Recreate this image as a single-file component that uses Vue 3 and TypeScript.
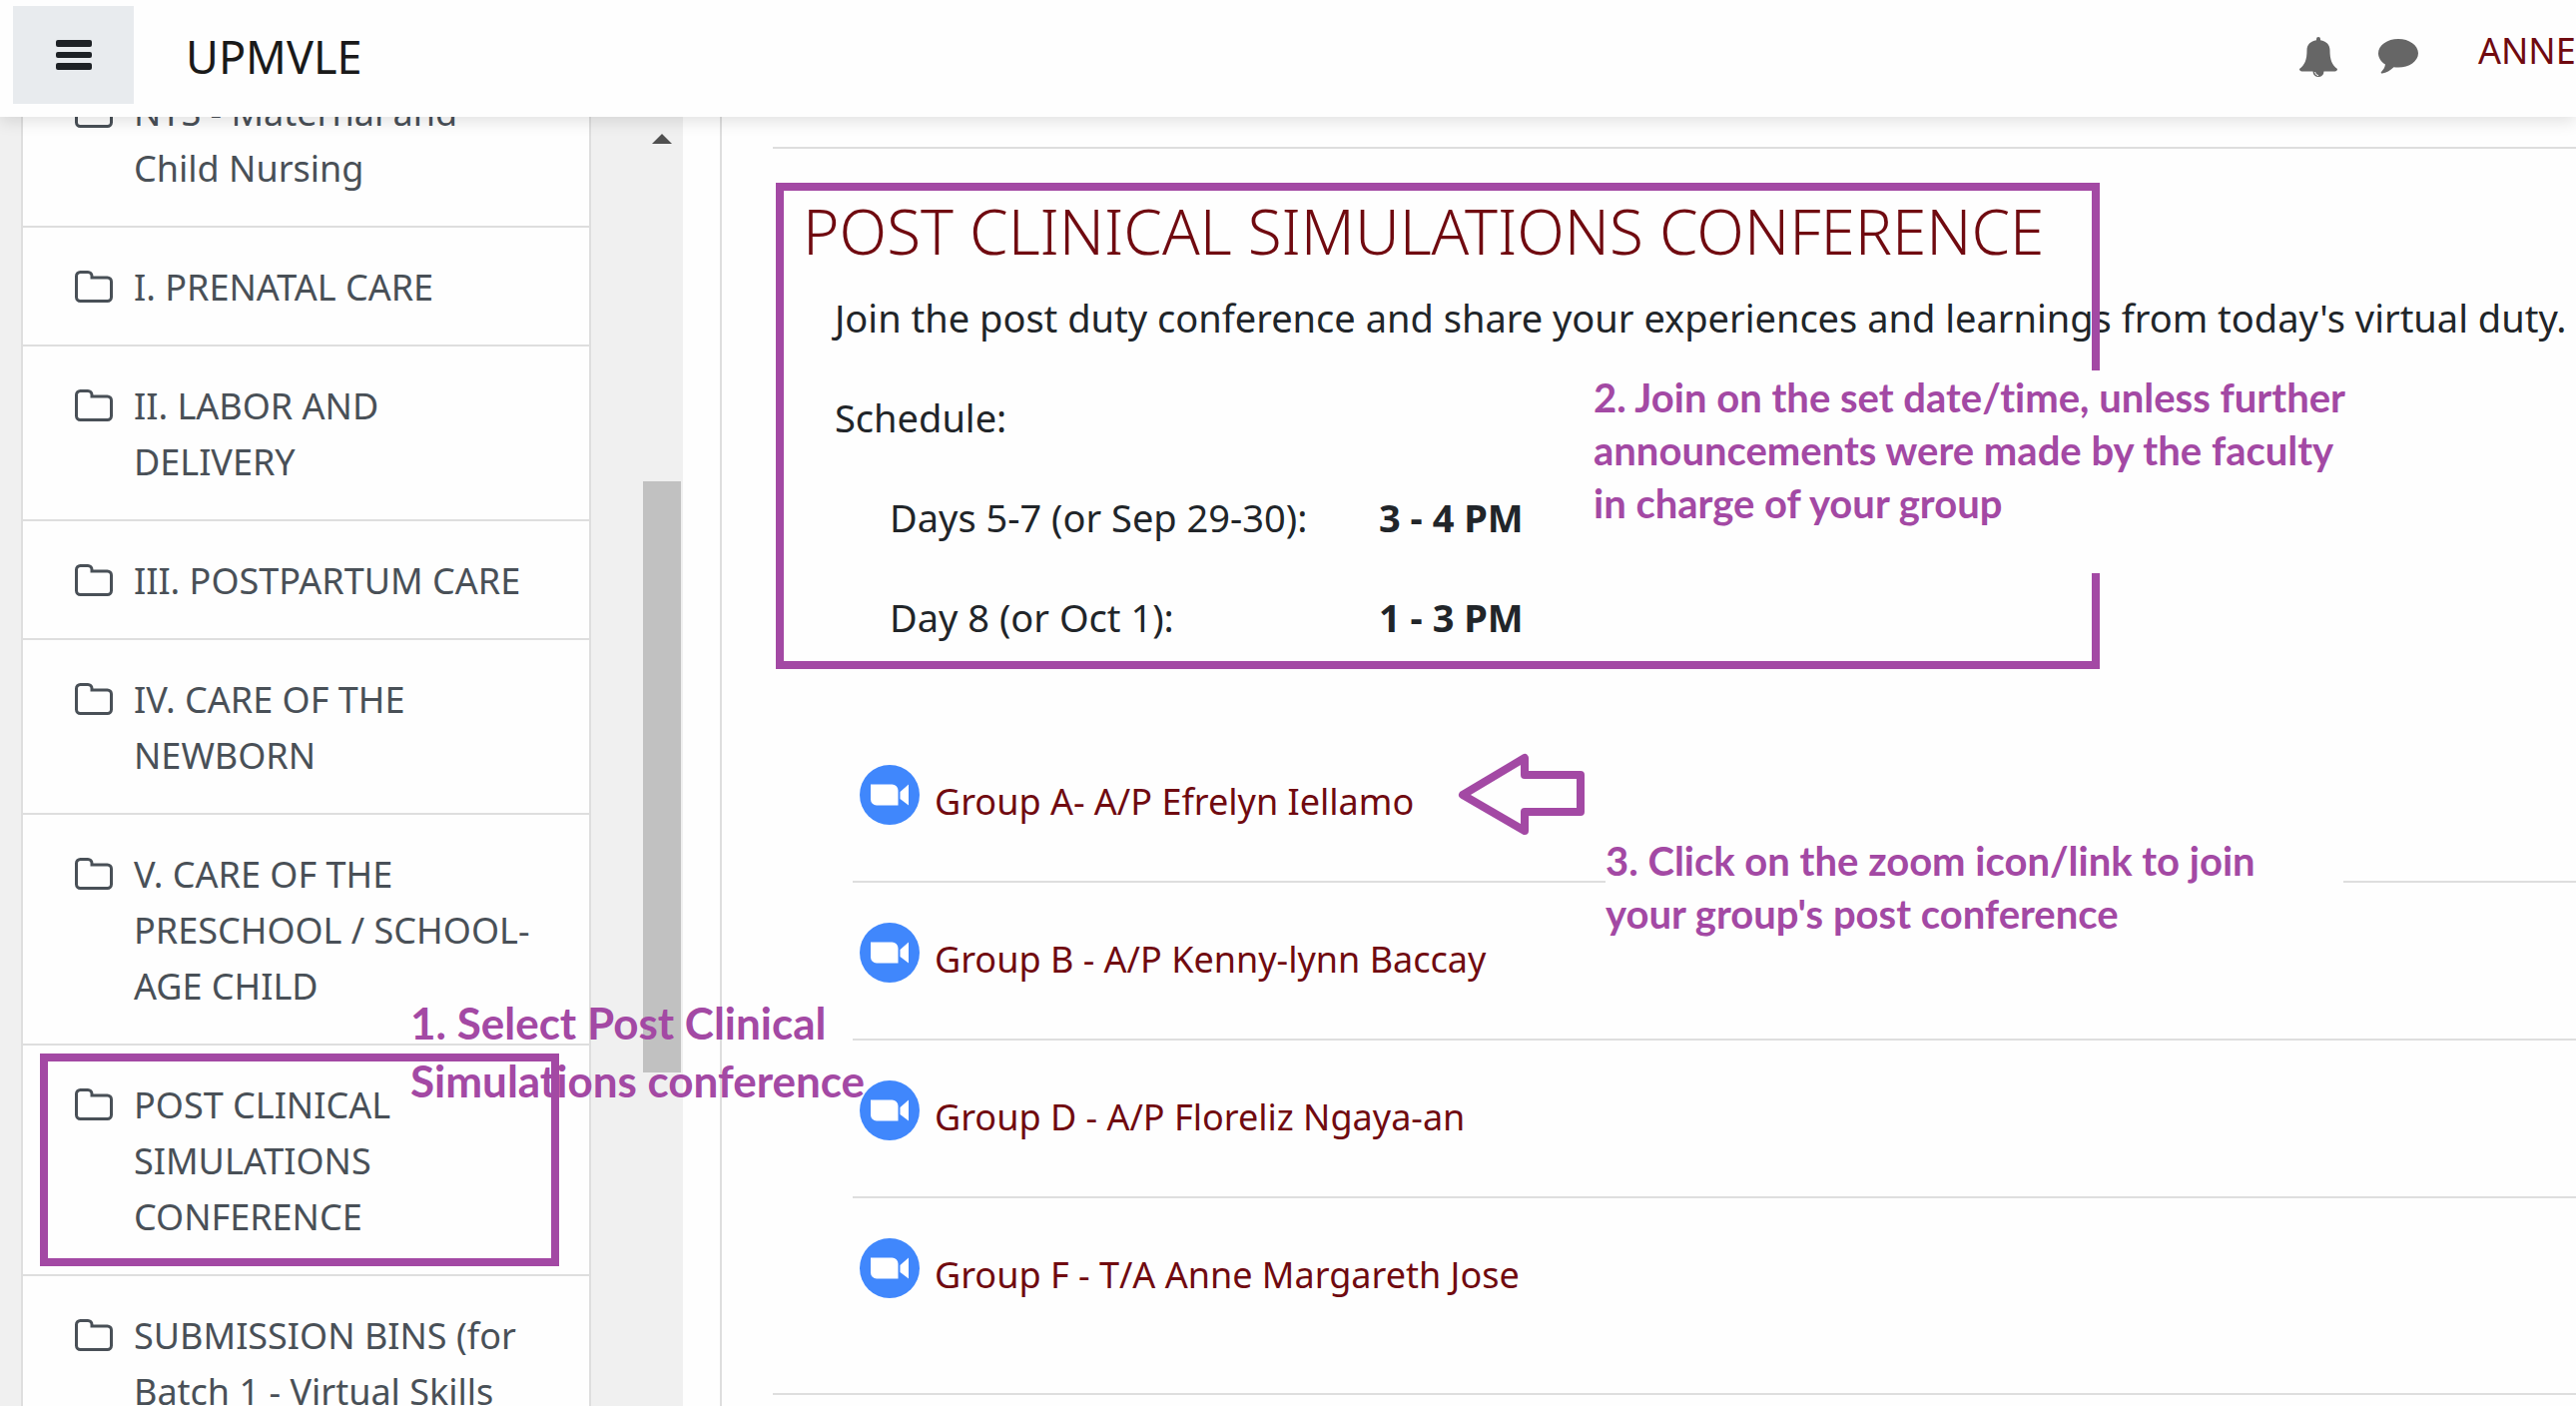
<script setup lang="ts">
interface Group {
  id: string
  label: string
}

const sections: string[] = [
  'NTS - Maternal and Child Nursing',
  'I. PRENATAL CARE',
  'II. LABOR AND DELIVERY',
  'III. POSTPARTUM CARE',
  'IV. CARE OF THE NEWBORN',
  'V. CARE OF THE PRESCHOOL / SCHOOL-AGE CHILD',
  'POST CLINICAL SIMULATIONS CONFERENCE',
  'SUBMISSION BINS (for Batch 1 - Virtual Skills',
]
const selected = 'POST CLINICAL SIMULATIONS CONFERENCE'

const groups: Group[] = [
  { id: 'a', label: 'Group A- A/P Efrelyn Iellamo' },
  { id: 'b', label: 'Group B - A/P Kenny-lynn Baccay' },
  { id: 'd', label: 'Group D - A/P Floreliz Ngaya-an' },
  { id: 'f', label: 'Group F - T/A Anne Margareth Jose' },
]
</script>

<template>
  <div class="page">
    <header class="topbar">
      <button class="menu" type="button" aria-label="Side panel">
        <svg width="36" height="30" viewBox="0 0 36 30">
          <rect y="0" width="36" height="7" rx="2" />
          <rect y="12" width="36" height="6" rx="2" />
          <rect y="23" width="36" height="7" rx="2" />
        </svg>
      </button>
      <a class="brand" href="#">UPMVLE</a>
      <div class="tools">
        <button class="tool" type="button" aria-label="Notifications">
          <svg width="38" height="40" viewBox="0 0 38 40">
            <path d="M17 3.200V2a2 2 0 0 1 4 0v1.200C27 4 30.500 8 30.500 13c0 10 2 15 7.500 19 0 1.500-1 2.500-2.500 2.500h-33C1 34.500 0 33.500 0 32c5.500-4 7.500-9 7.500-19C7.500 8 11 4 17 3.200zM13.500 34.500h11a5.500 5.500 0 0 1-11 0z" />
            <path d="M15.500 35a4 4 0 0 0 3.500 3.600" fill="none" stroke="#fff" />
          </svg>
        </button>
        <button class="tool" type="button" aria-label="Messages">
          <svg width="40" height="35" viewBox="0 0 40 35">
            <path d="M20 0c11 0 20 6.300 20 14.300S31 28.600 20 28.600c-1.500 0-3-.1-4.500-.3-3.500 3.500-7.500 5.500-11.500 6.200-1 .2-1.800-.9-1-1.600 2-1.900 3.500-4 4-7.300C2.500 22.900 0 18.800 0 14.300 0 6.300 9 0 20 0z" />
          </svg>
        </button>
        <a class="user" href="#">ANNE</a>
      </div>
    </header>

    <div class="body">
      <aside class="drawer">
        <nav class="sections">
          <a
            v-for="name in sections"
            :key="name"
            href="#"
            class="section"
          >
            <svg class="folder" width="38" height="32" viewBox="0 0 38 32">
              <path d="M1.500 5.500a4 4 0 0 1 4-4h7.500a4 4 0 0 1 4 4v1.500h15.500a4 4 0 0 1 4 4v15.500a4 4 0 0 1-4 4h-27a4 4 0 0 1-4-4z" />
            </svg>
            <span>{{ name }}</span>
            <span v-if="name === selected" class="mark" />
          </a>
        </nav>
        <div class="track">
          <div class="arrow-up" />
          <div class="thumb" />
        </div>
        <p class="note note-one">1. Select Post Clinical<br />Simulations conference</p>
      </aside>

      <main class="content">
        <section class="topic">
          <h1>POST CLINICAL SIMULATIONS CONFERENCE</h1>
          <div class="summary">
            <p>Join the post duty conference and share your experiences and learnings from today's virtual duty.</p>
            <p>Schedule:</p>
            <p class="slot"><span>Days 5-7 (or Sep 29-30):</span><b>3 - 4 PM</b></p>
            <p class="slot"><span>Day 8 (or Oct 1):</span><b>1 - 3 PM</b></p>
          </div>
          <div class="frame" />
          <p class="note note-two">2. Join on the set date/time, unless further<br />announcements were made by the faculty<br />in charge of your group</p>

          <ul class="groups">
            <li v-for="group in groups" :key="group.id">
              <a href="#">
                <svg width="60" height="60" viewBox="0 0 60 60">
                  <circle cx="30" cy="30" r="30" fill="#4087fc" />
                  <path d="M11 19.500h21.500a6 6 0 0 1 6 6V40.500H17a6 6 0 0 1-6-6zM40.500 27l8.500-7.500v21L40.500 34z" fill="#fff" />
                </svg>
                <span>{{ group.label }}</span>
              </a>
            </li>
          </ul>
          <svg class="pointer" width="128" height="84" viewBox="0 0 128 84">
            <path d="M5 42L67 5V22H123V59H67V78z" />
          </svg>
          <p class="note note-three">3. Click on the zoom icon/link to join<br />your group's post conference</p>
        </section>
      </main>
    </div>
  </div>
</template>

<style>
body {
  margin: 0;
  overflow: hidden;
}
</style>

<style scoped>
.page {
  display: flex;
  flex-direction: column;
  height: 100vh;
  overflow: hidden;
  background: #fefefe;
  color: #212529;
  font-family: "Noto Sans", sans-serif;
  font-size: 36px;
  line-height: 56px;
}

a {
  color: inherit;
  text-decoration: none;
}

button {
  padding: 0;
  border: 0;
  background: none;
}

p,
h1,
ul {
  margin: 0;
  padding: 0;
}

svg {
  display: block;
  flex: none;
}

.topbar {
  position: relative;
  z-index: 3;
  flex: none;
  display: flex;
  align-items: center;
  box-sizing: border-box;
  height: 117px;
  padding: 0 0 8px 13px;
  background: #fefefe;
  box-shadow: 0 4px 16px rgba(0, 0, 0, 0.12);
}

.menu {
  display: flex;
  align-items: center;
  justify-content: center;
  width: 121px;
  height: 98px;
  background: #e8ebee;
  fill: #1d2125;
}

.brand {
  margin-left: 52px;
  padding-top: 4px;
  color: #1a1a1a;
  font-size: 45px;
}

.tools {
  display: flex;
  align-items: center;
  width: 277px;
  margin-left: auto;
}

.tool {
  margin-right: 41px;
  padding-top: 4px;
  fill: #666;
}

.user {
  margin-left: 19px;
  padding-bottom: 8px;
  color: #700a10;
}

.body {
  flex: 1;
  display: flex;
  min-height: 0;
}

.drawer {
  position: relative;
  z-index: 2;
  flex: none;
  display: flex;
  justify-content: space-between;
  box-sizing: border-box;
  width: 684px;
  padding-left: 21px;
  background: #f0f0f0;
}

.sections {
  align-self: flex-start;
  box-sizing: border-box;
  width: 571px;
  margin-top: -66px;
  border: 2px solid #dedede;
  background: #fefefe;
}

.section {
  position: relative;
  display: flex;
  align-items: flex-start;
  gap: 21px;
  padding: 32px 48px 29px 52px;
  border-bottom: 2px solid #dedede;
  color: #495057;
}

.folder {
  margin-top: 11px;
  fill: none;
  stroke: #495057;
  stroke-width: 3;
}

.mark {
  position: absolute;
  inset: 8px 30px 8px 17px;
  border: 8px solid #a349a4;
}

.track {
  width: 40px;
  padding-top: 17px;
}

.arrow-up {
  width: 0;
  margin-left: 9px;
  border: 10px solid transparent;
  border-top: 0;
  border-bottom-color: #505050;
}

.thumb {
  width: 38px;
  height: 592px;
  margin-top: 338px;
  background: #c1c1c1;
}

.content {
  flex: 1;
  min-width: 0;
  margin-left: 37px;
  padding: 30px 0 0 51px;
  border-left: 2px solid #dedede;
}

.topic {
  position: relative;
  box-sizing: border-box;
  height: 1250px;
  padding-top: 39px;
  border-top: 2px solid #dedede;
  border-bottom: 2px solid #dedede;
}

h1 {
  padding-left: 30px;
  color: #700a10;
  font-size: 62px;
  font-weight: 300;
  line-height: 86px;
  white-space: nowrap;
}

.summary {
  display: flex;
  flex-direction: column;
  gap: 44px;
  padding: 16px 0 0 62px;
  font-size: 38px;
  white-space: nowrap;
}

.slot {
  display: flex;
  padding-left: 55px;
}

.slot span {
  width: 490px;
}

.frame {
  position: absolute;
  top: 34px;
  left: 3px;
  box-sizing: border-box;
  width: 1326px;
  height: 487px;
  border: 8px solid #a349a4;
}

.groups {
  margin: 80px 0 0 80px;
  list-style: none;
}

.groups li {
  padding: 40px 7px 56px;
  border-bottom: 2px solid #dedede;
}

.groups li:last-child {
  border-bottom: 0;
}

.groups a {
  display: flex;
  align-items: flex-end;
  gap: 15px;
  width: max-content;
  color: #700a10;
}

.groups span {
  height: 51px;
}

.note {
  position: absolute;
  color: #a349a4;
  font-family: Lato, sans-serif;
  font-size: 40px;
  font-weight: 700;
  font-variant-ligatures: none;
  line-height: 53px;
  white-space: nowrap;
}

.note-one {
  top: 878px;
  left: 411px;
  font-size: 44px;
  line-height: 58px;
}

.note-two {
  top: 222px;
  left: 814px;
  padding: 1px 8px 43px;
  background: #fefefe;
}

.note-three {
  top: 687px;
  left: 834px;
  padding-right: 88px;
  background: #fefefe;
}

.pointer {
  position: absolute;
  top: 605px;
  left: 686px;
  fill: none;
  stroke: #a349a4;
  stroke-width: 8;
  stroke-linejoin: round;
}
</style>
